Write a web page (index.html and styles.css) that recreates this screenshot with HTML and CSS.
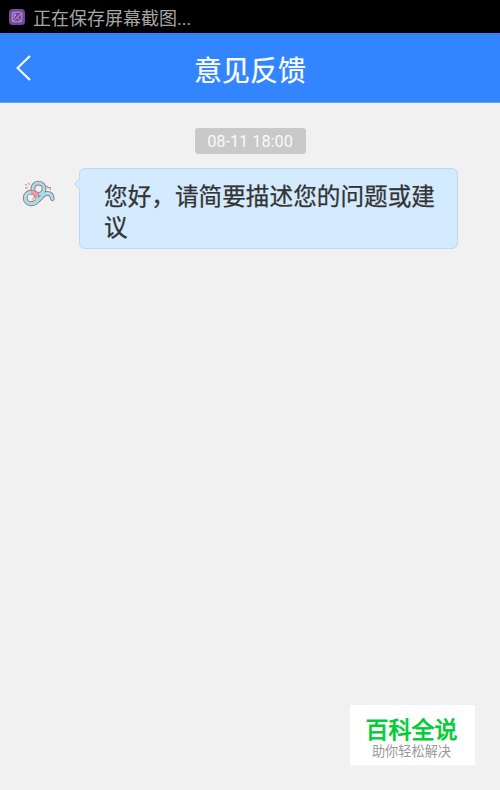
FILE: index.html
```
<!DOCTYPE html>
<html lang="zh-CN">
<head>
<meta charset="utf-8">
<title>意见反馈</title>
<link rel="stylesheet" href="styles.css">
</head>
<body>
<div class="status">
  <svg class="status-icon" viewBox="0 0 16 16"><rect width="16" height="16" rx="3.5" fill="#74479f"/><g fill="none" stroke="#b99bd0" stroke-width="1"><rect x="3.2" y="3.2" width="9.6" height="9.6" rx="1"/><path d="M3.5 12.5 12.500 4.500M8 8.500l4.500 4M3.500 9.500 7 6"/><circle cx="5.500" cy="5.500" r="1"/></g></svg>
  <span>正在保存屏幕截图...</span>
</div>
<header class="header">
  <svg class="back" viewBox="0 0 16 26"><path d="M14 1 1.500 13 14 25" fill="none" stroke="#fff" stroke-width="2"/></svg>
  <h1>意见反馈</h1>
</header>
<main class="chat">
  <time class="time">08-11 18:00</time>
  <div class="message">
    <svg class="avatar" viewBox="0 0 34 28">
      <g fill="none" stroke-linecap="round">
        <g stroke="#9b7279" stroke-width="4.800">
          <circle cx="16.500" cy="8.700" r="5.600"/><circle cx="9" cy="18" r="5.800"/>
          <path d="M9 23.800c8 0 10-10.500 16.500-10.500 3.500 0 4.500 3 4.800 5.200"/>
        </g>
        <g stroke="#a0e1ed" stroke-width="3">
          <circle cx="16.500" cy="8.700" r="5.600"/><circle cx="9" cy="18" r="5.800"/>
          <path d="M9 23.800c8 0 10-10.500 16.500-10.500 3.500 0 4.500 3 4.800 5.200"/>
        </g>
        <path d="M9.500 12.500c3.500 0 5.500 2 6 4" stroke="#9b7279" stroke-width="4.600" stroke-linecap="butt"/>
        <path d="M9.500 12.500c3.500 0 5.500 2 6 4" stroke="#f994ae" stroke-width="3.600" stroke-linecap="butt"/>
        <path d="M3.500 4.500l1.500 1M6.500 3l1 1.500M3.500 8h2M25 6l1 2 2-1 .5 2.500" stroke="#b96872" stroke-width=".9"/>
      </g>
      <circle cx="12.500" cy="19" r="1.600" fill="#ffe2a3" stroke="#a47767" stroke-width=".6"/>
    </svg>
    <div class="bubble">
      <svg class="tail" viewBox="0 0 7 14"><path d="M7 0v14L1 7.500Q.3 7 1 6.500Z" fill="#d3eaff"/><path d="M6 1 1 6.500Q.4 7 1 7.500L6 13" fill="none" stroke="#bdd8f3"/></svg>
      <p>您好，请简要描述您的问题或建议</p>
    </div>
  </div>
</main>
<aside class="brand"><strong>百科全说</strong><span>助你轻松解决</span></aside>
</body>
</html>
```
FILE: styles.css
```
* { box-sizing: border-box; }
body {
  margin: 0;
  height: 790px;
  display: flex;
  flex-direction: column;
  background: #f1f1f1;
  font-family: Roboto, "Noto Sans CJK SC", sans-serif;
  overflow: hidden;
}
.status {
  height: 33px;
  flex: none;
  display: flex;
  align-items: center;
  gap: 8px;
  padding-left: 9px;
  background: #000;
  color: #a6a6a6;
  font-size: 18px;
  line-height: 33px;
}
.status-icon { width: 16px; height: 16px; }
.status span { padding-top: 3px; }
.header {
  height: 70px;
  flex: none;
  display: grid;
  grid-template-columns: 34px 1fr 34px;
  align-items: center;
  background: #3385ff;
  border-bottom: 1px solid #65a4fb;
  color: #fff;
}
.back { width: 16px; height: 26px; margin-left: 16px; }
.header h1 {
  margin: 0;
  padding-top: 8px;
  text-align: center;
  font-size: 28px;
  font-weight: 400;
  line-height: 40px;
  -webkit-text-stroke: 0.2px #fff;
}
.chat {
  flex: 1;
  display: flex;
  flex-direction: column;
  padding-top: 25px;
}
.time {
  align-self: center;
  width: 111px;
  height: 26px;
  border-radius: 3px;
  background: #c9c9c9;
  color: #fafafa;
  font-size: 16.3px;
  line-height: 27px;
  text-align: center;
}
.message { display: flex; margin: 14px 0 0 22px; }
.avatar { width: 34px; height: 28px; margin-top: 12px; }
.bubble {
  position: relative;
  width: 379px;
  height: 81px;
  margin-left: 23px;
  padding: 13px 20px 0 24px;
  border: 1px solid #bdd8f3;
  border-radius: 6px;
  background: #d3eaff;
}
.bubble p {
  margin: 0;
  color: #333;
  font-size: 23.65px;
  line-height: 31px;
  -webkit-text-stroke: 0.25px #333;
}
.tail { position: absolute; left: -6px; top: 8px; width: 7px; height: 14px; }
.brand {
  align-self: flex-end;
  flex: none;
  display: flex;
  flex-direction: column;
  align-items: center;
  width: 125px;
  height: 60px;
  margin: 0 25px 25px 0;
  padding: 12px 2px 0 0;
  background: #fff;
}
.brand strong {
  color: #00cc33;
  font-size: 23px;
  line-height: 28px;
  font-weight: 400;
  -webkit-text-stroke: 0.8px #00cc33;
}
.brand span { color: #999; font-size: 13.2px; line-height: 14px; }
```
